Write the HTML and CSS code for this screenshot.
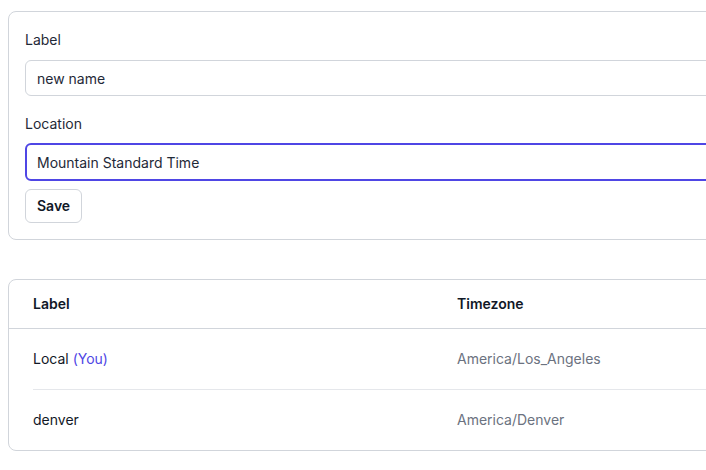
FILE: index.html
```html
<!DOCTYPE html>
<html lang="en">
<head>
<meta charset="utf-8">
<link rel="stylesheet" href="styles.css">
</head>
<body>
<div class="page">
  <form class="card form-card">
    <label class="field-label" for="label">Label</label>
    <input id="label" class="input" type="text" value="new name">
    <label class="field-label loc" for="loc">Location</label>
    <input id="loc" class="input focused" type="text" value="Mountain Standard Time">
    <button type="button" class="btn">Save</button>
  </form>

  <div class="card table-card">
    <div class="thead">
      <div>Label</div>
      <div>Timezone</div>
    </div>
    <div class="trow">
      <div class="name">Local <span class="you">(You)</span></div>
      <div class="tz">America/Los_Angeles</div>
    </div>
    <div class="trow">
      <div class="name">denver</div>
      <div class="tz">America/Denver</div>
    </div>
  </div>
</div>
</body>
</html>
```

FILE: styles.css
```css
html, body {
  margin: 0;
  padding: 0;
  overflow: hidden;
  background: #ffffff;
}
body {
  font-family: Inter, "Noto Sans", sans-serif;
  font-size: 14px;
  line-height: 20px;
  color: #111827;
}
.page {
  width: 1100px;
  padding: 11px 0 0 8px;
  display: flex;
  flex-direction: column;
  gap: 39px;
}
.card {
  border: 1px solid #d1d5db;
  border-radius: 8px;
  background: #fff;
}
.form-card {
  display: flex;
  flex-direction: column;
  align-items: flex-start;
  padding: 18px 16px 16px 16px;
  margin: 0;
}
.field-label {
  display: block;
  color: #1f2937;
  margin-bottom: 10px;
}
.field-label.loc {
  margin-top: 18px;
  margin-bottom: 9px;
}
.input {
  box-sizing: border-box;
  width: 100%;
  height: 36px;
  border: 1px solid #d1d5db;
  border-radius: 6px;
  padding: 0 11px;
  font: inherit;
  color: #1f2937;
  background: #fff;
  outline: none;
}
.input.focused {
  height: 38px;
  border: 2px solid #4f46e5;
  padding: 0 10px;
}
.btn {
  margin-top: 8px;
  box-sizing: border-box;
  height: 34px;
  padding: 0 11px;
  border: 1px solid #d1d5db;
  border-radius: 6px;
  background: #fff;
  font: inherit;
  font-weight: 600;
  color: #111827;
}
.table-card {
  display: flex;
  flex-direction: column;
}
.thead {
  display: grid;
  grid-template-columns: 424px 1fr;
  height: 48px;
  align-items: center;
  padding-left: 24px;
  border-bottom: 1px solid #d1d5db;
  font-weight: 600;
  color: #111827;
}
.trow {
  display: grid;
  grid-template-columns: 424px 1fr;
  height: 60px;
  align-items: center;
  margin-left: 24px;
}
.trow + .trow {
  border-top: 1px solid #e5e7eb;
}
.name {
  font-weight: 400;
  color: #111827;
}
.you {
  color: #4f46e5;
}
.tz {
  color: #6b7280;
}
```
